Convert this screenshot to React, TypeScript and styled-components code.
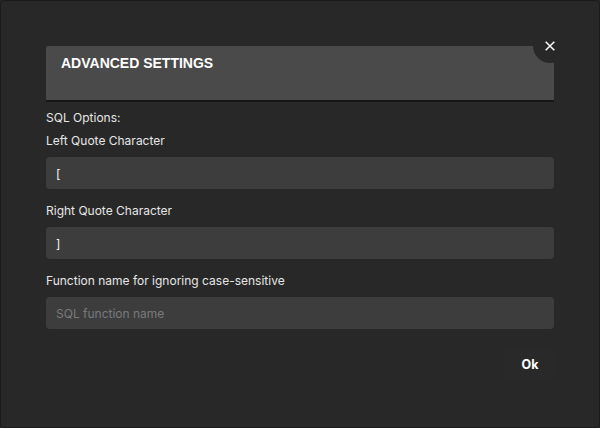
import React from "react";
import styled, { createGlobalStyle } from "styled-components";

const Global = createGlobalStyle`
  html, body { margin: 0; padding: 0; background: #282828; }
  * { box-sizing: border-box; }
`;

const Frame = styled.div`
  position: relative;
  width: 600px;
  height: 428px;
  background: #282828;
  border: 1px solid #1b1b1b;
  border-radius: 4px;
  padding: 45px 45px 0 45px;
  display: flex;
  flex-direction: column;
  font-family: Inter, "Noto Sans", sans-serif;
  color: #e6e6e6;
`;

const Header = styled.div`
  height: 56px;
  background: #4a4a4a;
  border-bottom: 2px solid #161616;
  border-radius: 2px 2px 0 0;
  padding: 8px 15px 0 15px;
`;

const Title = styled.h1`
  margin: 0;
  font-family: "Liberation Sans", Arial, sans-serif;
  font-size: 14px;
  font-weight: 700;
  line-height: 18px;
  color: #ffffff;
`;

const CloseButton = styled.button`
  position: absolute;
  left: 532px;
  top: 28px;
  width: 34px;
  height: 34px;
  border-radius: 50%;
  border: none;
  background: #282828;
  color: #ffffff;
  padding: 0;
  display: flex;
  align-items: center;
  justify-content: center;
  cursor: pointer;
`;

const Body = styled.div`
  display: flex;
  flex-direction: column;
  padding-top: 7px;
`;

const Section = styled.div`
  font-size: 12px;
  line-height: 18px;
  color: #e6e6e6;
`;

const Label = styled.label<{ $gap: number }>`
  display: block;
  font-size: 12px;
  line-height: 18px;
  color: #e6e6e6;
  margin-top: ${(p) => p.$gap}px;
  margin-bottom: 7px;
`;

const Input = styled.input`
  width: 100%;
  height: 32px;
  background: #3d3d3e;
  border: none;
  border-radius: 4px;
  padding: 0 10px;
  font-family: Inter, "Noto Sans", sans-serif;
  font-size: 12px;
  color: #f2f2f2;
  outline: none;
  &::placeholder { color: #7a7a7a; }
`;

const Footer = styled.div`
  display: flex;
  justify-content: flex-end;
  margin-top: 18px;
`;

const OkButton = styled.button`
  width: 50px;
  height: 34px;
  margin-right: -1px;
  background: #292929;
  border: none;
  border-radius: 3px;
  color: #ffffff;
  font-family: Inter, "Noto Sans", sans-serif;
  font-weight: 700;
  font-size: 12.5px;
  cursor: pointer;
`;

export default function App() {
  return (
    <>
      <Global />
      <Frame>
        <Header>
          <Title>ADVANCED SETTINGS</Title>
        </Header>
        <CloseButton aria-label="Close">
          <svg width="10" height="10" viewBox="0 0 10 10">
            <path d="M1.2 1.2 L8.8 8.8 M8.8 1.2 L1.2 8.8" stroke="#fff" strokeWidth="1.5" strokeLinecap="square" />
          </svg>
        </CloseButton>
        <Body>
          <Section>SQL Options:</Section>
          <Label $gap={5}>Left Quote Character</Label>
          <Input defaultValue="[" />
          <Label $gap={13}>Right Quote Character</Label>
          <Input defaultValue="]" />
          <Label $gap={13}>Function name for ignoring case-sensitive</Label>
          <Input placeholder="SQL function name" />
          <Footer>
            <OkButton>Ok</OkButton>
          </Footer>
        </Body>
      </Frame>
    </>
  );
}
